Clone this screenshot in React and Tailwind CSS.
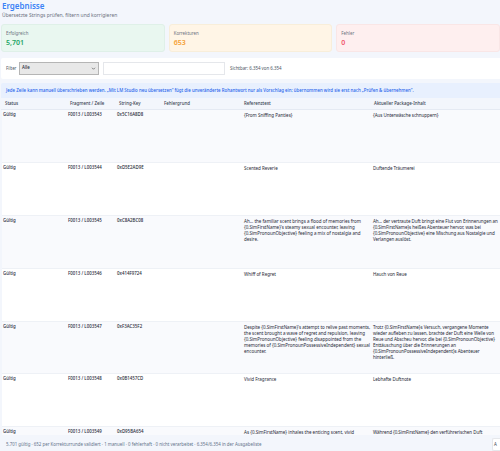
const rows = [
  ["F0013 / L003543", "0x5C16A8D8", "{From Sniffing Panties}", "{Aus Unterwäsche schnuppern}"],
  ["F0013 / L003544", "0xD5E2AD9E", "Scented Reverie", "Duftende Träumerei"],
  ["F0013 / L003545", "0xC8A2BC08", "Ah... the familiar scent brings a flood of memories from {0.SimFirstName}'s steamy sexual encounter, leaving {0.SimPronounObjective} feeling a mix of nostalgia and desire.", "Ah... der vertraute Duft bringt eine Flut von Erinnerungen an {0.SimFirstName}s heißes Abenteuer hervor, was bei {0.SimPronounObjective} eine Mischung aus Nostalgie und Verlangen auslöst."],
  ["F0013 / L003546", "0x414F9724", "Whiff of Regret", "Hauch von Reue"],
  ["F0013 / L003547", "0xF3AC35F2", "Despite {0.SimFirstName}'s attempt to relive past moments, the scent brought a wave of regret and repulsion, leaving {0.SimPronounObjective} feeling disappointed from the memories of {0.SimPronounPossessiveIndependent} sexual encounter.", "Trotz {0.SimFirstName}s Versuch, vergangene Momente wieder aufleben zu lassen, brachte der Duft eine Welle von Reue und Abscheu hervor, die bei {0.SimPronounObjective} Enttäuschung über die Erinnerungen an {0.SimPronounPossessiveIndependent}s Abenteuer hinterließ."],
  ["F0013 / L003548", "0x0B1457CD", "Vivid Fragrance", "Lebhafte Duftnote"],
  ["F0013 / L003549", "0xD95BA654", "As {0.SimFirstName} inhales the enticing scent, vivid", "Während {0.SimFirstName} den verführerischen Duft"],
];
const cols = "grid grid-cols-[64px_51px_48px_79px_129px_1fr]";

function Stat({ label, value, box, color }) {
  return (
    <div className={`flex-1 h-[28px] rounded-[3px] border px-[4px] pt-[5px] ${box}`}>
      <div className="text-[4.4px] leading-[7px] text-[#6b7280]">{label}</div>
      <div className={`text-[7px] leading-[10px] mt-[1px] font-semibold ${color}`}>{value}</div>
    </div>
  );
}

export default function App() {
  return (
    <div className="h-[451px] w-[500px] overflow-hidden flex flex-col bg-[#f3f6fc] text-[4.4px] text-[#1f2937] font-['Noto_Sans','Open_Sans',sans-serif]">
      <div className="px-[2px] pt-[1px] h-[24px] shrink-0">
        <h1 className="text-[8px] leading-[10px] font-semibold text-[#3b82f6]">Ergebnisse</h1>
        <p className="text-[5px] leading-[8px] text-[#6b7280]">Übersetzte Strings prüfen, filtern und korrigieren</p>
      </div>
      <div className="flex gap-[4px] pl-[1px] shrink-0">
        <Stat label="Erfolgreich" value="5,701" box="bg-[#e9f7f0] border-[#dff0e8]" color="text-[#22a565]" />
        <Stat label="Korrekturen" value="653" box="bg-[#fff5e6] border-[#f8eeda]" color="text-[#f59e32]" />
        <Stat label="Fehler" value="0" box="bg-[#feefef] border-[#f9e6e6]" color="text-[#f0556a]" />
      </div>
      <div className="mt-[6px] h-[21px] shrink-0 bg-white ml-[1px] flex items-center pl-[5px] rounded-l-[2px]">
        <span className="text-[#4b5563] w-[13px]">Filter</span>
        <div className="w-[80px] h-[13px] bg-[#e8e8e8] border border-[#b5b5b5] flex items-start justify-between px-[2px] font-medium leading-[7px] pt-[1px] mt-[-1px] mr-[4px]">
          <span>Alle</span>
          <svg width="5" height="5" viewBox="0 0 10 10" className="mt-[2px]"><path d="M2 3.5l3 3 3-3" fill="none" stroke="#555" strokeWidth="1.4" /></svg>
        </div>
        <div className="w-[122px] h-[13px] bg-white border border-[#e5e7eb] mr-[5px]" />
        <span className="text-[#4b5563]">Sichtbar: 6.354 von 6.354</span>
      </div>
      <div className="mt-[4px] ml-[1px] flex-1 min-h-0 overflow-hidden flex flex-col">
        <div className="h-[15px] shrink-0 bg-[#e8f0fe] text-[#2563eb] font-medium leading-[15px] pl-[5px] whitespace-nowrap rounded-tl-[2px]">
          Jede Zeile kann manuell überschrieben werden. „Mit LM Studio neu übersetzen“ fügt die unveränderte Rohantwort nur als Vorschlag ein; übernommen wird sie erst nach „Prüfen &amp; übernehmen“.
        </div>
        <div className={`${cols} h-[12px] shrink-0 bg-[#f3f6fc] border-b border-[#e5eaf3] text-[#374151] font-medium leading-[11px]`}>
          <div className="pl-[4px]">Status</div>
          <div className="pl-[5px]">Fragment / Zeile</div>
          <div className="pl-[3px]">String-Key</div>
          <div>Fehlergrund</div>
          <div className="pl-[1px]">Referenztext</div>
          <div className="pl-[2px]">Aktueller Package-Inhalt</div>
        </div>
        <div className="pl-[1px]">
          {rows.map((r, i) => (
            <div key={r[1]} className={`${cols} h-[52.9px] border-b border-[#eef1f6] ${i % 2 === 0 ? "bg-[#f9fafd]" : "bg-white"}`}>
              <div className="pt-[1px] pl-[1px] font-medium leading-[6px]">Gültig</div>
              <div className="pt-[1px] pl-[2px] font-medium leading-[6px]">{r[0]}</div>
              <div className="pt-[1px] font-medium leading-[6px]">{r[1]}</div>
              <div />
              <div className="pt-[2px] pr-[2px] text-[4.5px] leading-[6px]">{r[2]}</div>
              <div className="pt-[2px] text-[4.5px] leading-[6px] tracking-[-0.05px]">{r[3]}</div>
            </div>
          ))}
        </div>
      </div>
      <div className="h-[16px] shrink-0 flex items-center justify-between pl-[6px] bg-[#f3f6fc] text-[#64748b]">
        <span className="mt-[3px]">5.701 gültig · 652 per Korrekturrunde validiert · 1 manuell · 0 fehlerhaft · 0 nicht verarbeitet · 6.354/6.354 in der Ausgabeliste</span>
        <div className="h-[13px] w-[8px] bg-white border border-[#e5e7eb] rounded-l-[2px] border-r-0 text-[#374151] pl-[1px] leading-[11px] mt-[3px]">A</div>
      </div>
    </div>
  );
}
